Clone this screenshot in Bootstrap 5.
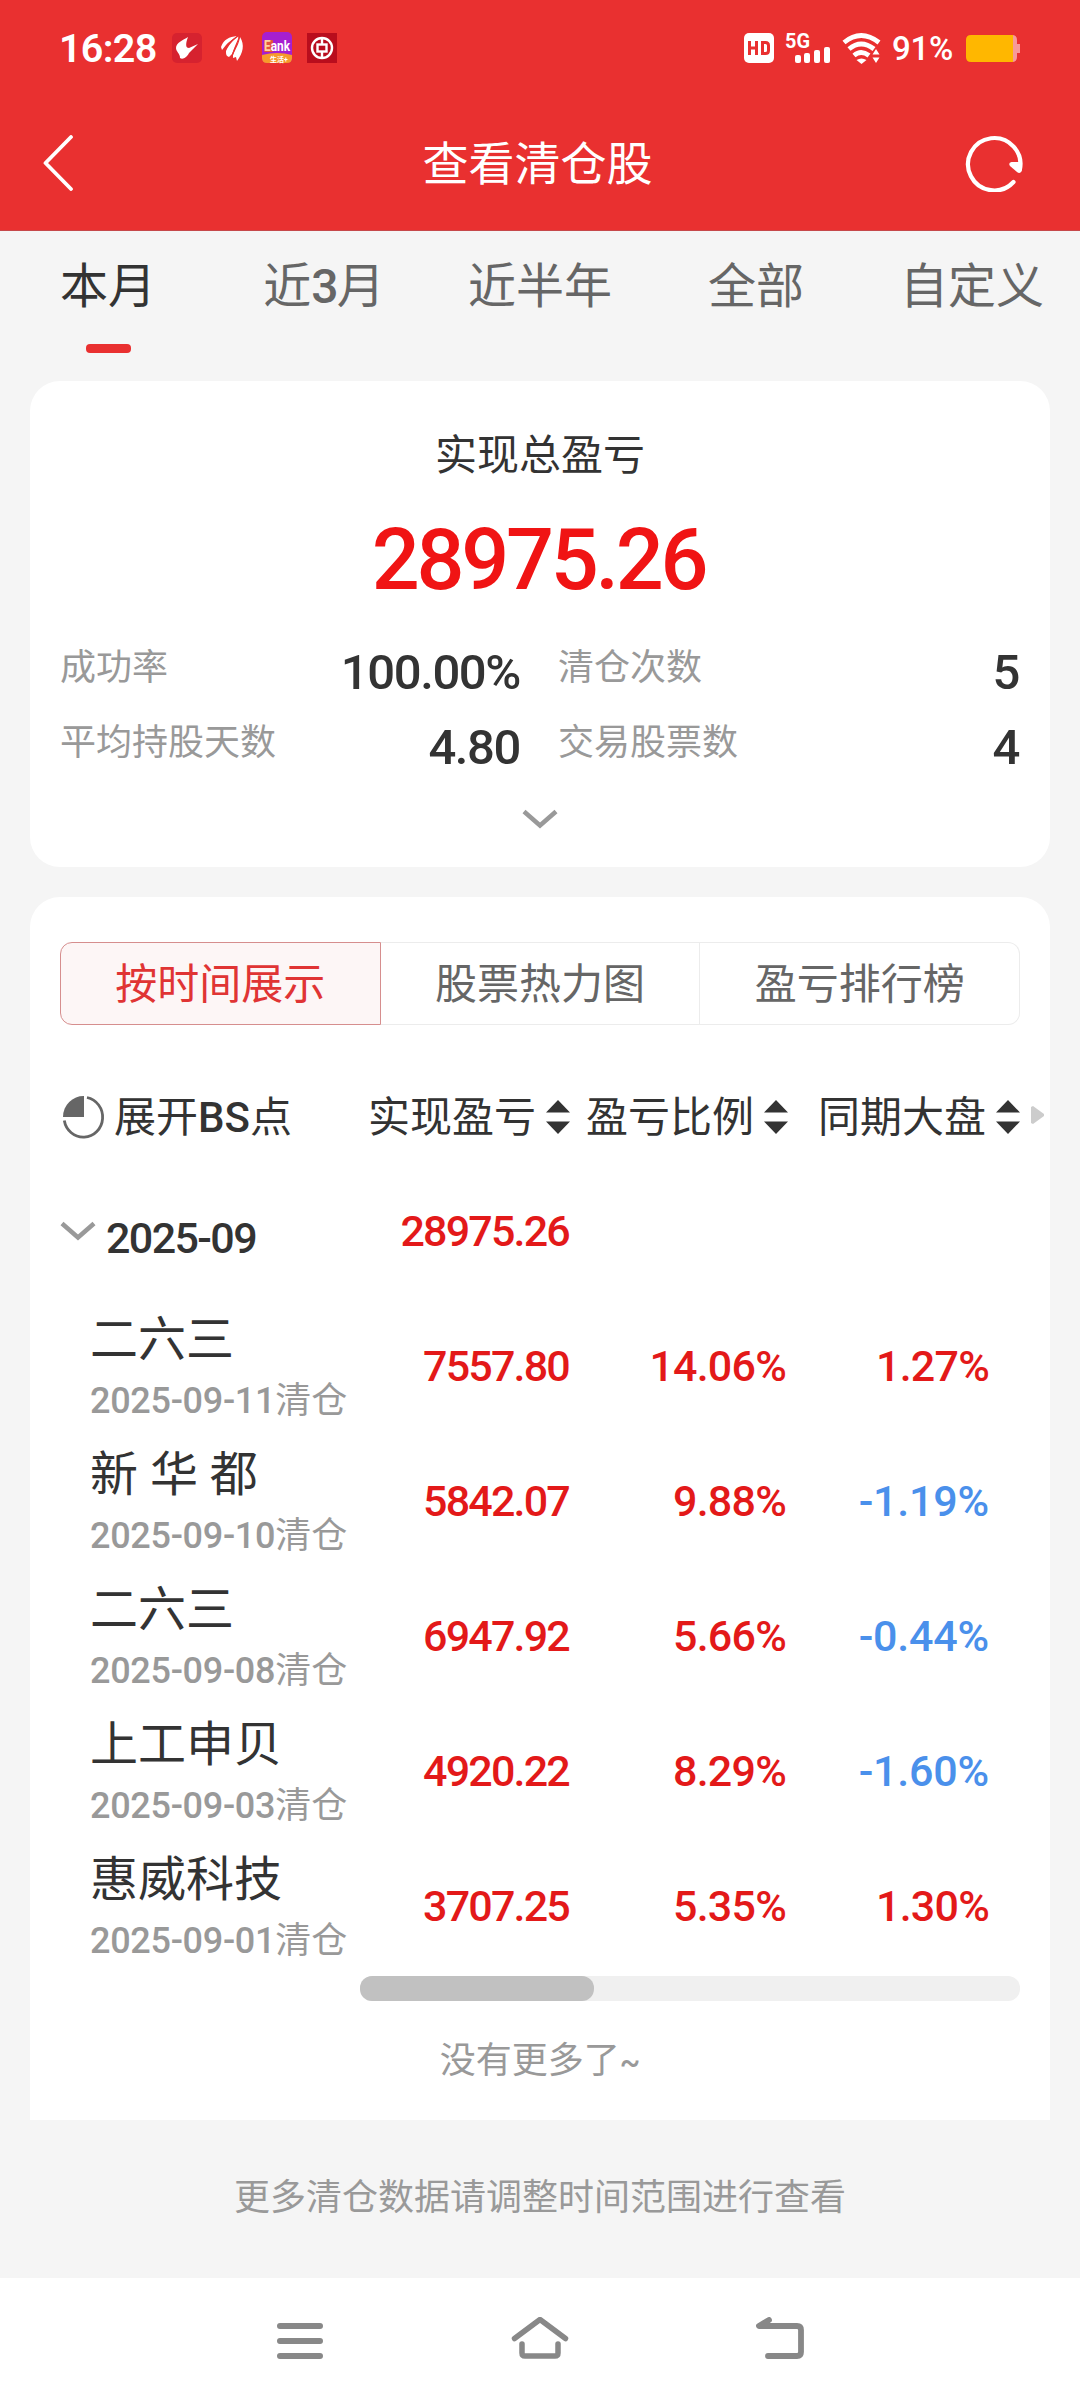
<!DOCTYPE html>
<html lang="zh-CN">
<head>
<meta charset="utf-8">
<meta name="viewport" content="width=device-width, initial-scale=1">
<title>查看清仓股</title>
<link href="https://cdn.jsdelivr.net/npm/bootstrap@5.3.0/dist/css/bootstrap.min.css" rel="stylesheet">
<style>
  body { width: 1080px; height: 2404px; margin: 0; background: #f5f5f5; color: #333; overflow: hidden;
    font-family: Roboto, "Noto Sans CJK SC", sans-serif; font-size: 42px; line-height: 60px; }
  svg { display: block; flex: none; }
  .top-area { height: 231px; background: #e93030; border-bottom: 1px solid #c6484a; color: #fff; }
  .status { height: 96px; padding: 0 60px 0 59px; }
  .clock { font-size: 39.5px; font-weight: 600; line-height: 60px; width: 113px; letter-spacing: -.7px; padding-top: 1px; }
  .pct { font-size: 33px; font-weight: 500; line-height: 60px; margin-left: 10px; width: 74px; letter-spacing: -.2px; padding-top: 2px; }
  .titlebar { height: 134px; padding: 0 57px 0 42px; }
  .titlebar h1 { font-size: 46px; line-height: 60px; margin: 2px 0 0 10px; font-weight: 400; }
  .range { height: 150px; }
  .range a { width: 216px; padding-top: 26px; font-size: 48px; color: #666; text-decoration: none; }
  .range a.on { color: #333; }
  .range .latin { letter-spacing: -2px; }
  .range .bar { width: 45px; height: 9px; border-radius: 4px; background: #e93030; margin-top: 27px; }
  .panel { margin: 0 30px; background: #fff; padding: 0 30px; }
  .summary { height: 486px; border-radius: 30px; padding-top: 45px; }
  .total { font-size: 84.5px; font-weight: 500; line-height: 100px; color: #f01414; letter-spacing: -3.3px; padding: 25px 3px 0 0; height: 147px; }
  .stat { height: 75px; width: 460px; }
  .stat.r { width: 461px; margin-left: 38px; }
  .stat .k { font-size: 36px; color: #999; padding-top: 1px; }
  .stat .v { font-size: 49px; font-weight: 500; padding-top: 6px; letter-spacing: -1.4px; }
  .fold { margin-top: 22px; }
  .detail { margin-top: 30px; height: 1223px; border-radius: 30px 30px 0 0; padding-top: 45px; }
  .switch { height: 83px; }
  .switch a { flex: 1 1 0; border: 1px solid #ececec; border-left: 0; color: #666; text-decoration: none; padding-top: 2px; }
  .switch a:first-child { border: 1px solid #d68e8e; background: #fdf6f6; color: #e03434; border-radius: 12px 0 0 12px; }
  .switch a:last-child { border-radius: 0 12px 12px 0; }
  .thead-row { height: 92px; margin-top: 46px; }
  .cap { padding-top: 2px; }
  .line { height: 135px; }
  .c0 { width: 300px; } .c1 { width: 210px; } .c2 { width: 218px; } .c3 { width: 232px; }
  .sortable { gap: 10px; }
  .num { font-size: 43px; font-weight: 500; text-align: right; color: #e31919; letter-spacing: -1.8px; padding-top: 1px; }
  .num.down { color: #4a90eb; }
  .num.c2, .num.c3 { letter-spacing: -.8px; }
  .num.c1 { padding-right: 1px; } .num.c2 { padding-right: 2px; } .num.c3 { padding-right: 31px; }
  .num.down { letter-spacing: -.2px; }
  .month { font-size: 43px; font-weight: 500; padding-top: 14px; margin-left: 10px; letter-spacing: -1.6px; }
  .stock { padding: 9px 0 0 30px; white-space: nowrap; }
  .stock .nm { font-size: 48px; height: 61px; }
  .stock .dt { font-size: 36px; color: #999; }
  .stock .latin { letter-spacing: -.3px; }
  .latin { font-weight: 500; }
  .track { height: 25px; margin: 3px 0 0 300px; background: #f0f0f0; border-radius: 12px; }
  .thumb { width: 234px; height: 25px; background: #c1c1c1; border-radius: 12px; }
  .nomore { font-size: 36px; color: #999; margin-top: 30px; }
  .nomore .latin { font-size: 31px; }
  .hint { font-size: 36px; color: #999; height: 158px; padding-top: 48px; }
  .softkeys { height: 126px; background: #fff; padding: 0 276px; }
  .more-arrow { left: 971px; top: 35px; }
</style>
<script src="https://cdn.jsdelivr.net/npm/bootstrap@5.3.0/dist/js/bootstrap.bundle.min.js"></script>
</head>
<body>
<svg width="0" height="0" class="position-absolute"><defs>
  <symbol id="sort" viewBox="0 0 24 34"><path fill="#333" d="M12 0L24 12.500H0zM12 34L24 21.500H0z"/></symbol>
  <symbol id="down" viewBox="0 0 36 20"><path fill="none" stroke="#999" stroke-width="4.500" d="M2 2.500L18 16.500L34 2.500"/></symbol>
</defs></svg>

<header class="top-area">
  <div class="status d-flex align-items-center">
    <span class="clock">16:28</span>
    <svg width="166" height="32" viewBox="0 0 166 32">
      <rect y="1" width="30" height="30" rx="5" fill="#d6222f"/>
      <path fill="#fff" d="M16 5C11 8 4 11 4 16c0 4 4 5 4 10 3 2 7-1 9-5l9-9-9 4c-3 0-4-3-1-11z"/>
      <g fill="#fff"><path d="M49 15C52 7 57 5 65 4C60 8 56 10 54 13L50 18z"/><path d="M54 19C57 12 61 9 66 4C68 10 63 13 60 22L57 25C54 24 54 22 54 19z"/><path d="M61 23C64 16 67 12 68 5C73 13 71 21 65 29L64 25L61 26z"/></g>
      <path fill="none" stroke="#e93030" stroke-width="1.200" d="M53 18Q57 10 66 4M60 24Q63 15 67.500 5"/>
      <rect x="90" width="30" height="31" rx="5" fill="#a61fd0"/>
      <path fill="#f79a2a" d="M90 23q15-4 30 0v3q0 5-5 5H95q-5 0-5-5z"/>
      <rect x="92" y="8" width="9" height="12" rx="1" fill="#e5533a"/>
      <text x="92" y="19" font-size="14" font-weight="700" fill="#fff" textLength="26" lengthAdjust="spacingAndGlyphs"><tspan fill="#ffd0a0">E</tspan>ank</text>
      <text x="98" y="29.500" font-size="7" font-weight="700" fill="#fff">生活+</text>
      <rect x="135" y="1" width="30" height="30" fill="#b90d1d"/>
      <g fill="none" stroke="#fff" stroke-width="2.400"><circle cx="150" cy="16" r="10"/><rect x="145.500" y="12.500" width="9" height="7"/><path d="M150 6v6M150 20v6"/></g>
    </svg>
    <svg class="ms-auto" width="138" height="52" viewBox="0 -10 138 52">
      <rect y="1" width="30" height="30" rx="5" fill="#fff"/>
      <path fill="none" stroke="#e93030" stroke-width="3" d="M5.500 9v14M12.500 9v14M5.500 16h7M18.500 10.500v11h3q3 0 3-3v-5q0-3-3-3z"/>
      <text x="41" y="15.500" font-size="20" font-weight="700" fill="#fff" textLength="25" lengthAdjust="spacingAndGlyphs">5G</text>
      <g fill="#fff"><rect x="51" y="23" width="6" height="8" rx="2"/><rect x="60" y="21" width="6" height="10" rx="2"/><rect x="70" y="18" width="6" height="13" rx="2"/><rect x="80" y="15" width="6" height="16" rx="2"/></g>
      <g fill="none" stroke="#fff" stroke-width="4.800"><path d="M100 10.500q17-14 35 0"/><path d="M105 17q12-10 25 0"/><path d="M110 23.500q7-6 15 0"/></g>
      <path fill="#fff" d="M112.500 28q5-3 10 0L117.500 32zM132 17l3.500 5.500h-7zM132 31l3.500-5.500h-7z"/>
    </svg>
    <span class="pct">91%</span>
    <svg width="54" height="27" viewBox="0 0 54 27"><path fill="#f79a9a" d="M5 0h41q5 0 5 5v4h3v9h-3v4q0 5-5 5H5z"/><path fill="#ffb700" d="M5 0h42v27H5q-5 0-5-5V5q0-5 5-5z"/></svg>
  </div>
  <div class="titlebar d-flex align-items-center justify-content-between">
    <svg width="58" height="56" viewBox="0 0 58 56"><path fill="none" stroke="#fff" stroke-width="3.800" stroke-linecap="round" stroke-linejoin="round" d="M29 2L3.500 28L29 54"/></svg>
    <h1>查看清仓股</h1>
    <svg width="58" height="58" viewBox="0 0 58 58"><path fill="none" stroke="#fff" stroke-width="4.200" stroke-linecap="round" d="M48.500 48A26.200 26.200 0 1 1 54.800 36"/><path fill="#fff" d="M46.500 28h10v9q-1.500 3.500-4.500 1l-7-6q-2-3 1.500-4z"/></svg>
  </div>
</header>

<nav class="range d-flex">
  <a class="on d-flex flex-column align-items-center">本月<span class="bar"></span></a>
  <a class="text-center">近<span class="latin">3</span>月</a><a class="text-center">近半年</a><a class="text-center">全部</a><a class="text-center">自定义</a>
</nav>

<section class="panel summary">
  <div class="text-center">实现总盈亏</div>
  <div class="total text-center">28975.26</div>
  <div class="d-flex flex-wrap pt-1">
    <div class="stat d-flex justify-content-between"><span class="k">成功率</span><span class="v">100.00%</span></div>
    <div class="stat r d-flex justify-content-between"><span class="k">清仓次数</span><span class="v">5</span></div>
    <div class="stat d-flex justify-content-between"><span class="k">平均持股天数</span><span class="v">4.80</span></div>
    <div class="stat r d-flex justify-content-between"><span class="k">交易股票数</span><span class="v">4</span></div>
  </div>
  <svg class="fold mx-auto" width="36" height="20"><use href="#down"/></svg>
</section>

<section class="panel detail">
  <div class="switch d-flex">
    <a class="d-flex align-items-center justify-content-center">按时间展示</a>
    <a class="d-flex align-items-center justify-content-center">股票热力图</a>
    <a class="d-flex align-items-center justify-content-center">盈亏排行榜</a>
  </div>
  <div class="thead-row d-flex align-items-center position-relative">
    <div class="c0 d-flex align-items-center">
      <svg width="54" height="46" viewBox="0 0 54 46"><path fill="#666" d="M24 23H3A20.500 21 0 0 1 24 2z"/><path fill="none" stroke="#666" stroke-width="2.800" d="M27 3.500A19.300 20 0 1 1 4.300 26.500"/></svg>
      <span class="cap">展开<span class="latin">BS</span>点</span>
    </div>
    <div class="c1 sortable d-flex align-items-center justify-content-end"><span class="cap">实现盈亏</span><svg width="24" height="34"><use href="#sort"/></svg></div>
    <div class="c2 sortable d-flex align-items-center justify-content-end"><span class="cap">盈亏比例</span><svg width="24" height="34"><use href="#sort"/></svg></div>
    <div class="c3 sortable d-flex align-items-center justify-content-end"><span class="cap">同期大盘</span><svg width="24" height="34"><use href="#sort"/></svg></div>
    <svg class="more-arrow position-absolute" width="14" height="18" viewBox="0 0 14 18"><path fill="#ccc" d="M0 1l2-1 11 8v2L2 18 0 17z"/></svg>
  </div>
  <div class="line d-flex align-items-center">
    <div class="c0 d-flex align-items-center"><svg width="36" height="20"><use href="#down"/></svg><span class="month">2025-09</span></div>
    <div class="c1 num">28975.26</div>
  </div>
  <div class="line d-flex align-items-center">
    <div class="c0 stock"><div class="nm">二六三</div><div class="dt"><span class="latin">2025-09-11</span>清仓</div></div>
    <div class="c1 num">7557.80</div><div class="c2 num">14.06%</div><div class="c3 num">1.27%</div>
  </div>
  <div class="line d-flex align-items-center">
    <div class="c0 stock"><div class="nm">新 华 都</div><div class="dt"><span class="latin">2025-09-10</span>清仓</div></div>
    <div class="c1 num">5842.07</div><div class="c2 num">9.88%</div><div class="c3 num down">-1.19%</div>
  </div>
  <div class="line d-flex align-items-center">
    <div class="c0 stock"><div class="nm">二六三</div><div class="dt"><span class="latin">2025-09-08</span>清仓</div></div>
    <div class="c1 num">6947.92</div><div class="c2 num">5.66%</div><div class="c3 num down">-0.44%</div>
  </div>
  <div class="line d-flex align-items-center">
    <div class="c0 stock"><div class="nm">上工申贝</div><div class="dt"><span class="latin">2025-09-03</span>清仓</div></div>
    <div class="c1 num">4920.22</div><div class="c2 num">8.29%</div><div class="c3 num down">-1.60%</div>
  </div>
  <div class="line d-flex align-items-center">
    <div class="c0 stock"><div class="nm">惠威科技</div><div class="dt"><span class="latin">2025-09-01</span>清仓</div></div>
    <div class="c1 num">3707.25</div><div class="c2 num">5.35%</div><div class="c3 num">1.30%</div>
  </div>
  <div class="track"><div class="thumb"></div></div>
  <div class="nomore text-center">没有更多了<span class="latin">~</span></div>
</section>

<div class="hint text-center">更多清仓数据请调整时间范围进行查看</div>

<footer class="softkeys d-flex align-items-center justify-content-between">
  <svg width="48" height="48" viewBox="0 0 48 48"><path stroke="#888" stroke-width="6" stroke-linecap="round" d="M4 9h40M4 24h40M4 39h40"/></svg>
  <svg width="60" height="48" viewBox="0 0 60 48"><path fill="none" stroke="#888" stroke-width="5.500" stroke-linecap="round" stroke-linejoin="round" d="M4.500 21.500L30 2.500L55.500 21.500M12 27v9q0 3 3 3h30q3 0 3-3v-9"/></svg>
  <svg width="48" height="48" viewBox="0 0 48 48"><path fill="none" stroke="#888" stroke-width="5.800" stroke-linecap="round" stroke-linejoin="round" d="M13 3L3 9h38q4 0 4 4v22q0 4-4 4H12"/></svg>
</footer>
</body>
</html>
